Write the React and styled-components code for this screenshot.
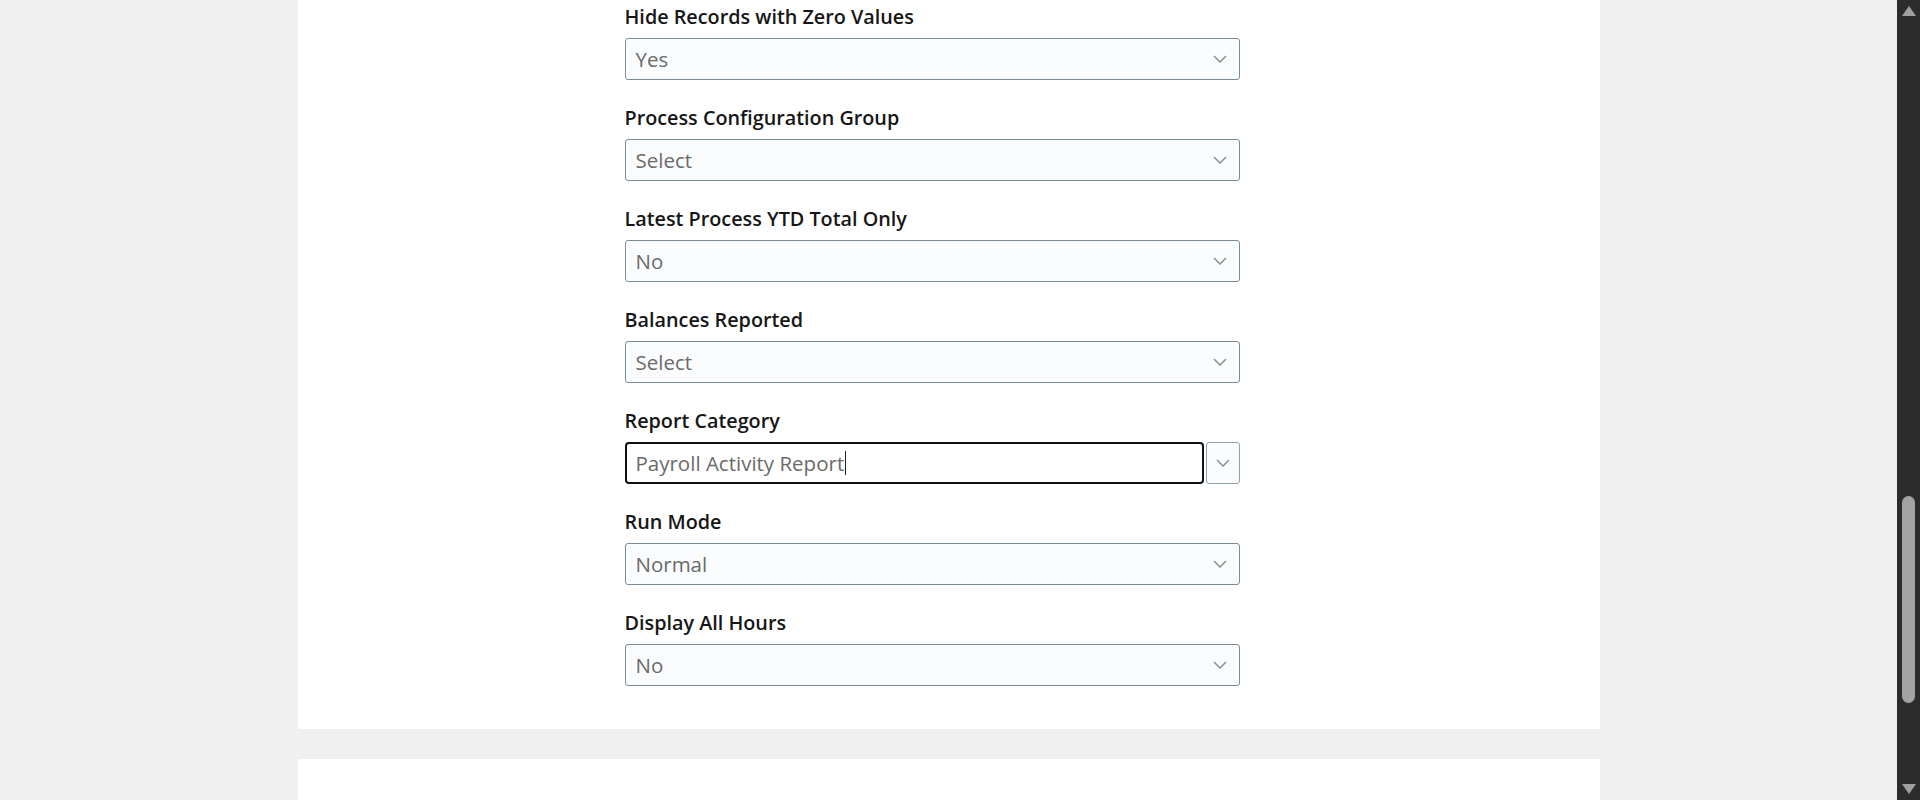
import React from "react";
import styled, { createGlobalStyle } from "styled-components";

const GlobalStyle = createGlobalStyle`
  html, body { margin: 0; padding: 0; }
  body {
    background: #f0f0f0;
    overflow: hidden;
    font-family: "Open Sans", "Noto Sans", "Liberation Sans", sans-serif;
  }
`;

const Page = styled.div`
  display: flex;
  height: 800px;
  overflow: hidden;
`;

const Main = styled.main`
  flex: 1;
  display: flex;
  flex-direction: column;
  align-items: center;
  gap: 30px;
  overflow: hidden;
`;

const Card = styled.section`
  width: 1302px;
  box-sizing: border-box;
  background: #ffffff;
  padding: ${(p) => p.$pad || "0"};
  min-height: ${(p) => p.$minH || "0"};
  flex-shrink: 0;
`;

const Form = styled.div`
  width: 615px;
  display: flex;
  flex-direction: column;
`;

const Field = styled.div`
  display: flex;
  flex-direction: column;
  margin-bottom: ${(p) => (p.$last ? "0" : "24px")};
`;

const Label = styled.label`
  font-size: 19.8px;
  line-height: 26px;
  font-weight: 600;
  color: #161616;
  padding-top: 1px;
  margin-bottom: 8px;
`;

const SelectBox = styled.div`
  height: 42px;
  box-sizing: border-box;
  border: 1px solid #7b8b95;
  border-radius: 3px;
  background: #fafcfe;
  display: flex;
  align-items: center;
  padding: 0 12px 0 10px;
  font-size: 20.5px;
  color: #6a6a6a;
`;

const Value = styled.span`
  flex: 1;
`;

const ComboRow = styled.div`
  display: flex;
  gap: 2px;
  height: 42px;
`;

const ComboInput = styled.div`
  flex: 1;
  box-sizing: border-box;
  border: 2px solid #111111;
  border-radius: 4px;
  background: #ffffff;
  display: flex;
  align-items: center;
  padding: 0 9px;
  font-size: 20.5px;
  color: #6a6a6a;
`;

const Caret = styled.span`
  display: inline-block;
  width: 1px;
  height: 24px;
  background: #222;
  margin-left: 1px;
`;

const ComboButton = styled.div`
  width: 34px;
  box-sizing: border-box;
  border: 1px solid #8fa1ab;
  border-radius: 3px;
  background: #fafcfe;
  display: flex;
  align-items: center;
  justify-content: center;
`;

const Scrollbar = styled.div`
  width: 23px;
  background: #2c2c2c;
  display: flex;
  flex-direction: column;
  align-items: center;
  flex-shrink: 0;
`;

const UpArrow = styled.div`
  margin-top: 6px;
  width: 0;
  height: 0;
  border-left: 7px solid transparent;
  border-right: 7px solid transparent;
  border-bottom: 10px solid #a0a0a0;
`;

const Thumb = styled.div`
  margin-top: 480px;
  width: 13px;
  height: 207px;
  border-radius: 7px;
  background: #a3a3a3;
`;

const DownArrow = styled.div`
  margin-top: auto;
  margin-bottom: 6px;
  width: 0;
  height: 0;
  border-left: 7px solid transparent;
  border-right: 7px solid transparent;
  border-top: 10px solid #a0a0a0;
`;

const Chevron = () => (
  <svg width="14" height="8" viewBox="0 0 14 8" fill="none">
    <polyline points="1,1 7,7 13,1" stroke="#8e8e8e" strokeWidth="1.5" fill="none" />
  </svg>
);

const fields = [
  { label: "Hide Records with Zero Values", value: "Yes" },
  { label: "Process Configuration Group", value: "Select" },
  { label: "Latest Process YTD Total Only", value: "No" },
  { label: "Balances Reported", value: "Select" },
  { label: "Report Category", value: "Payroll Activity Report", combo: true },
  { label: "Run Mode", value: "Normal" },
  { label: "Display All Hours", value: "No" },
];

export default function App() {
  return (
    <>
      <GlobalStyle />
      <Page>
        <Main>
          <Card $pad="3px 0 43px 327px">
            <Form>
              {fields.map((f, i) => (
                <Field key={f.label} $last={i === fields.length - 1}>
                  <Label>{f.label}</Label>
                  {f.combo ? (
                    <ComboRow>
                      <ComboInput>
                        {f.value}
                        <Caret />
                      </ComboInput>
                      <ComboButton>
                        <Chevron />
                      </ComboButton>
                    </ComboRow>
                  ) : (
                    <SelectBox>
                      <Value>{f.value}</Value>
                      <Chevron />
                    </SelectBox>
                  )}
                </Field>
              ))}
            </Form>
          </Card>
          <Card $minH="200px" />
        </Main>
        <Scrollbar>
          <UpArrow />
          <Thumb />
          <DownArrow />
        </Scrollbar>
      </Page>
    </>
  );
}
